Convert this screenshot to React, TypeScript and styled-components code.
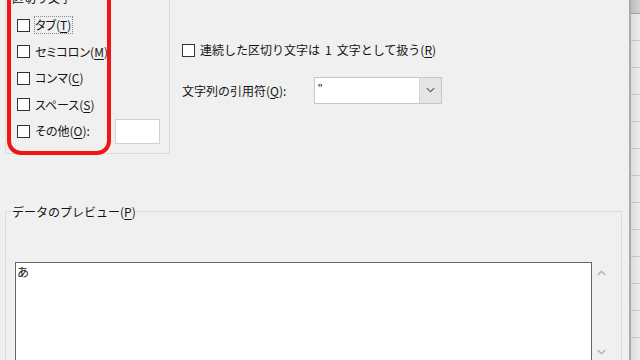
import React from "react";
import styled, { createGlobalStyle } from "styled-components";

const GlobalStyle = createGlobalStyle`
    html, body {
        margin: 0;
        padding: 0;
        background: #f0f0f0;
        overflow: hidden;
    }
    body {
        font-family: "Noto Sans CJK JP", "Noto Sans", sans-serif;
        font-size: 12px;
        color: #141414;
    }
`

const Screen = styled.div`
    display: flex;
    width: 640px;
    height: 360px;
    overflow: hidden;
`

const Dialog = styled.div`
    position: relative;
    flex: 1;
    overflow: hidden;
    background: #f0f0f0;
`

const TopArea = styled.div`
    display: flex;
    align-items: flex-start;
    margin-top: -10px;
`

const GroupBox = styled.fieldset<{ $width: number }>`
    box-sizing: border-box;
    width: ${p => p.$width}px;
    min-width: 0;
    margin: 0 0 0 5px;
    border: 1px solid #dcdcdc;
`

const DelimGroup = styled(GroupBox)`
    padding: 6px 8px 8px 11px;
`

const PreviewGroup = styled(GroupBox)`
    margin-top: 50px;
    padding: 42px 0 0 9px;
`

const Legend = styled.legend<{ $shift: number }>`
    padding: 0;
    margin-left: ${p => p.$shift}px;
    line-height: 16px;
    font-size: 12px;
    white-space: nowrap;
`

const CheckRow = styled.div`
    display: flex;
    align-items: center;
    gap: 5px;
    height: 26.5px;
    white-space: nowrap;
`

const Box = styled.span`
    flex: none;
    width: 13px;
    height: 13px;
    box-sizing: border-box;
    border: 1px solid #333;
    background: #fff;
`

const Caption = styled.span<{ $focused?: boolean; $tight?: boolean }>`
    line-height: 16px;
    padding: 1px 2px 1px 1px;
    margin-left: -1px;
    font-feature-settings: ${p => (p.$tight ? '"palt"' : "normal")};
    outline: ${p => (p.$focused ? "1px dotted #8a8a8a" : "none")};
    outline-offset: -1px;
`

const Key = styled.u`
    text-underline-offset: 2px;
    text-decoration-thickness: 1px;
`

const Gap = styled.span`
    display: inline-block;
    width: 5px;
`

const OtherField = styled.span`
    width: 45px;
    height: 25px;
    margin-left: auto;
    margin-right: 1px;
    box-sizing: border-box;
    border: 1px solid #d0d0d0;
    background: #fff;
`

const OptionsPane = styled.div`
    display: flex;
    flex-direction: column;
    gap: 13px;
    margin-left: 12px;
    padding-top: 47px;
`

const QuoteRow = styled.div`
    display: flex;
    align-items: center;
    height: 27px;
`

const QuoteLabel = styled.span`
    width: 132px;
    white-space: nowrap;
`

const Combo = styled.div`
    display: flex;
    width: 128px;
    height: 27px;
    box-sizing: border-box;
    border: 1px solid #c6c6c6;
    background: #fff;
`

const ComboValue = styled.span`
    flex: 1;
    padding-left: 3px;
    line-height: 23px;
    font-family: "Liberation Sans", sans-serif;
`

const ComboButton = styled.span`
    width: 21px;
    display: flex;
    align-items: center;
    justify-content: center;
    background: #e5e5e5;
    border-left: 1px solid #d6d6d6;
`

const PreviewBody = styled.div`
    display: flex;
`

const PreviewText = styled.div`
    width: 577px;
    height: 130px;
    box-sizing: border-box;
    border: 1px solid #666;
    background: #fff;
    padding: 1px 1px;
    line-height: 16px;
`

const ScrollColumn = styled.div`
    width: 18px;
    display: flex;
    flex-direction: column;
    align-items: center;
    justify-content: space-between;
    padding-top: 8px;
    height: 85px;
`

const Annotation = styled.div`
    position: absolute;
    left: 7px;
    top: -20px;
    width: 104px;
    height: 175px;
    box-sizing: border-box;
    border: 4px solid #f01414;
    border-radius: 14px;
    pointer-events: none;
`

const SheetEdge = styled.div`
    flex: none;
    width: 11px;
    display: flex;
    flex-direction: column;
    box-sizing: border-box;
    border-left: 2px solid #a9a9a9;
    background: linear-gradient(to right, #dcdcdc, #ececec);
`

const HeaderCell = styled.div`
    flex: none;
    height: 13px;
    background: linear-gradient(to right, #bdbdbd, #d2d2d2);
    border-bottom: 1px solid #a0a0a0;
`

const RowCell = styled.div`
    flex: none;
    height: 26px;
    border-bottom: 1px solid #c4c4c4;
`

const Chevron = ({ up, color }: { up?: boolean; color: string }) => (
    <svg width="9" height="6" viewBox="0 0 9 6">
        <path d={up ? "M0.8 5 L4.5 1.3 L8.2 5" : "M0.8 1 L4.5 4.7 L8.2 1"} fill="none" stroke={color} strokeWidth="1.1" />
    </svg>
)

const delimiters = [
    { text: "タブ", key: "T", focused: true },
    { text: "セミコロン", key: "M" },
    { text: "コンマ", key: "C" },
    { text: "スペース", key: "S" },
]

const App = () => {
    return (
        <Screen>
            <GlobalStyle />
            <Dialog>
                <TopArea>
                    <DelimGroup $width={165}>
                        <Legend $shift={-5}>区切り文字</Legend>
                        {delimiters.map(d => (
                            <CheckRow key={d.key}>
                                <Box />
                                <Caption $tight $focused={d.focused}>{d.text}(<Key>{d.key}</Key>)</Caption>
                            </CheckRow>
                        ))}
                        <CheckRow>
                            <Box />
                            <Caption $tight>その他(<Key>O</Key>):</Caption>
                            <OtherField />
                        </CheckRow>
                    </DelimGroup>
                    <OptionsPane>
                        <CheckRow>
                            <Box />
                            <Caption>連続した区切り文字は<Gap />1<Gap />文字として扱う(<Key>R</Key>)</Caption>
                        </CheckRow>
                        <QuoteRow>
                            <QuoteLabel>文字列の引用符(<Key>Q</Key>):</QuoteLabel>
                            <Combo>
                                <ComboValue>"</ComboValue>
                                <ComboButton><Chevron color="#6a6a6a" /></ComboButton>
                            </Combo>
                        </QuoteRow>
                    </OptionsPane>
                </TopArea>
                <PreviewGroup $width={617}>
                    <Legend $shift={-3}>データのプレビュー(<Key>P</Key>)</Legend>
                    <PreviewBody>
                        <PreviewText>あ</PreviewText>
                        <ScrollColumn>
                            <Chevron up color="#a8a8a8" />
                            <Chevron color="#a8a8a8" />
                        </ScrollColumn>
                    </PreviewBody>
                </PreviewGroup>
                <Annotation />
            </Dialog>
            <SheetEdge>
                <HeaderCell />
                {Array.from({ length: 13 }).map((_, i) => (
                    <RowCell key={i} />
                ))}
            </SheetEdge>
        </Screen>
    )
}

export default App;
